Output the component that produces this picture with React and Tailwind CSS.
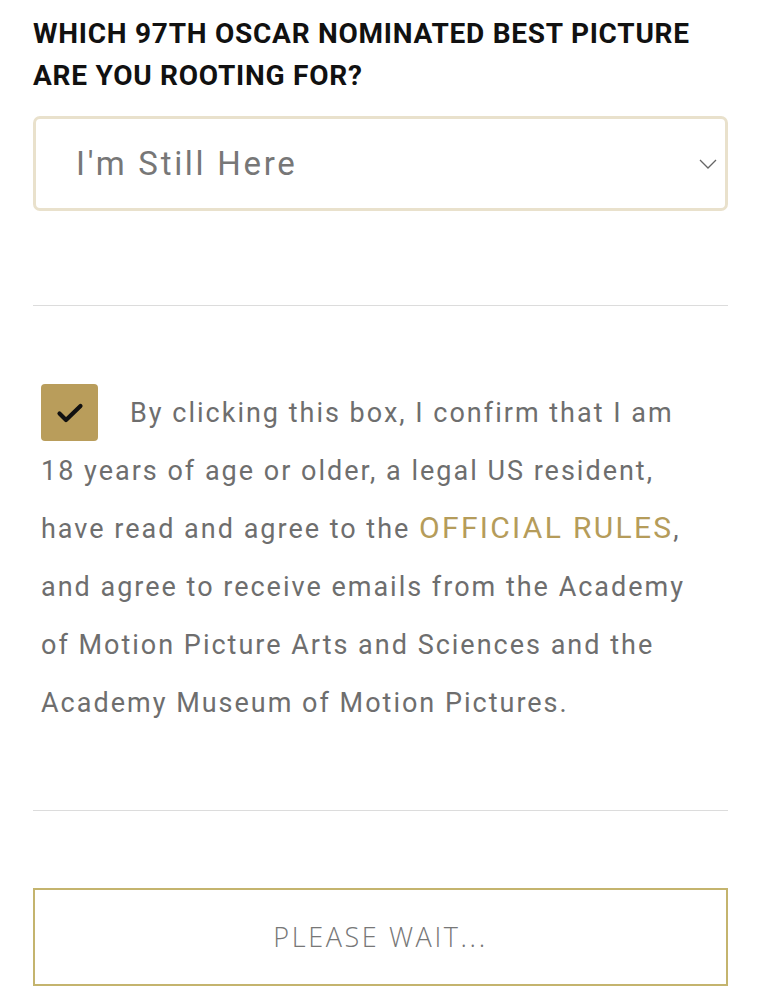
export default function App() {
  return (
    <div className="w-[761px] bg-white" style={{ fontFamily: "Roboto, 'Noto Sans', sans-serif" }}>
      <div className="px-[33px] pt-[13px]">
        <h2 className="text-[28px] font-bold leading-[42px] tracking-[0.75px] text-[#111] uppercase">
          Which 97th Oscar nominated best picture<br />are you rooting for?
        </h2>
        <div className="mt-[19px] h-[95px] border-[3px] border-[#e9e1cc] rounded-[7px] flex items-center justify-between pl-[40px] pr-[8px]">
          <span className="text-[33px] text-[#777] tracking-[2.7px]">I'm Still Here</span>
          <svg width="18" height="10" viewBox="0 0 18 10" fill="none" stroke="#666" strokeWidth="1.3">
            <path d="M1 1l8 8 8-8" />
          </svg>
        </div>
        <div className="h-[94px]" />
        <div className="h-px bg-[#dcdcdc]" />
        <div className="pt-[78px] pl-[8px] pr-[28px]">
          <p className="text-[27px] leading-[58px] tracking-[2px] text-[#6e6e6e]">
            <span className="float-left w-[57px] h-[57px] mr-[32px] rounded-[4px] bg-[#b99d5b] flex items-center justify-center">
              <svg width="28" height="22" viewBox="0 0 28 22" fill="none" stroke="#111" strokeWidth="4.2" strokeLinecap="round" strokeLinejoin="round">
                <path d="M3.5 11.5l6.5 6.5L24.5 4" />
              </svg>
            </span>
            By clicking this box, I confirm that I am 18 years of age or older, a legal US resident, have read and agree to the{" "}
            <span className="text-[#b59c5a] text-[30px] leading-none tracking-[2.3px]">OFFICIAL RULES</span>, and agree to receive emails from the Academy of Motion Picture Arts and Sciences and the Academy Museum of Motion Pictures.
          </p>
        </div>
        <div className="h-[78px]" />
        <div className="h-px bg-[#dcdcdc]" />
        <div className="h-[77px]" />
        <div className="h-[98px] border-2 border-[#c4b46e] flex items-center justify-center">
          <span className="text-[27px] text-[#777] tracking-[2.6px]" style={{ fontFamily: "'Open Sans', sans-serif", fontWeight: 300 }}>PLEASE WAIT...</span>
        </div>
        <div className="h-[20px]" />
      </div>
    </div>
  );
}
